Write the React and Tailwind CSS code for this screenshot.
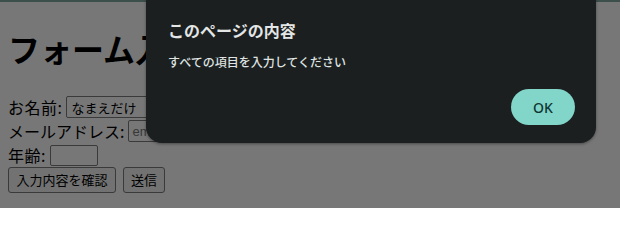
import React from "react";

const jp = { fontFamily: '"Noto Sans CJK JP", "Noto Sans", sans-serif' };

export default function App() {
  return (
    <div
      className="relative w-[620px] h-[208px] overflow-hidden bg-[#777777] text-black"
      style={jp}
    >
      <div className="h-[2px] bg-[#3c4f4b]" />
      <div className="pl-2">
        <h1 className="mt-[26px] text-[32px] leading-[40px] font-bold">フォーム入力</h1>
        <div className="mt-[27px] flex flex-col">
          <div className="h-[24px] flex items-center text-[16px] leading-[24px]">
            <span className="tracking-[0.5px]">お名前:</span>
            <div className="ml-[4px] w-[153px] h-[22px] border border-[#3a3a3a] rounded-[2px] flex items-center px-[4px] text-[13px] leading-none">
              なまえだけ
            </div>
          </div>
          <div className="h-[24px] flex items-center text-[16px] leading-[24px]">
            <span>メールアドレス:</span>
            <div className="ml-[4px] w-[153px] h-[22px] border border-[#3a3a3a] rounded-[2px] flex items-center px-[3px] text-[13px] leading-none text-[#383838]" style={{ fontFamily: '"Liberation Sans", sans-serif' }}>
              email
            </div>
          </div>
          <div className="h-[24px] flex items-center text-[16px] leading-[24px]">
            <span className="tracking-[0.5px]">年齢:</span>
            <div className="ml-[4px] w-[48px] h-[21px] border border-[#3a3a3a] rounded-[2px]" />
          </div>
          <div className="flex items-center gap-[7px]">
            <div className="w-[108px] h-[26px] border border-[#3a3a3a] rounded-[3px] bg-[#727272] flex items-center justify-center text-[13px]">
              入力内容を確認
            </div>
            <div className="w-[42px] h-[26px] border border-[#3a3a3a] rounded-[3px] bg-[#727272] flex items-center justify-center text-[13px]">
              送信
            </div>
          </div>
        </div>
      </div>

      <div className="absolute left-[146px] top-[-14px] w-[450px] h-[157px] rounded-[16px] bg-[#1b1f1f] shadow-[0_1px_3px_rgba(0,0,0,0.4)] flex flex-col pl-[22px] pr-[21px]">
        <div className="mt-[34px] text-[16px] leading-[20px] font-bold text-[#e3e6e5]">このページの内容</div>
        <div className="mt-[14px] text-[12px] leading-[16px] font-medium text-[#dfe3e2]">すべての項目を入力してください</div>
        <div className="mt-[19px] flex justify-end">
          <div className="w-[64px] h-[36px] rounded-full bg-[#82d5c9] flex items-center justify-center text-[14px] font-medium text-[#0e3632]" style={{ fontFamily: '"Noto Sans", sans-serif' }}>
            OK
          </div>
        </div>
      </div>
    </div>
  );
}
